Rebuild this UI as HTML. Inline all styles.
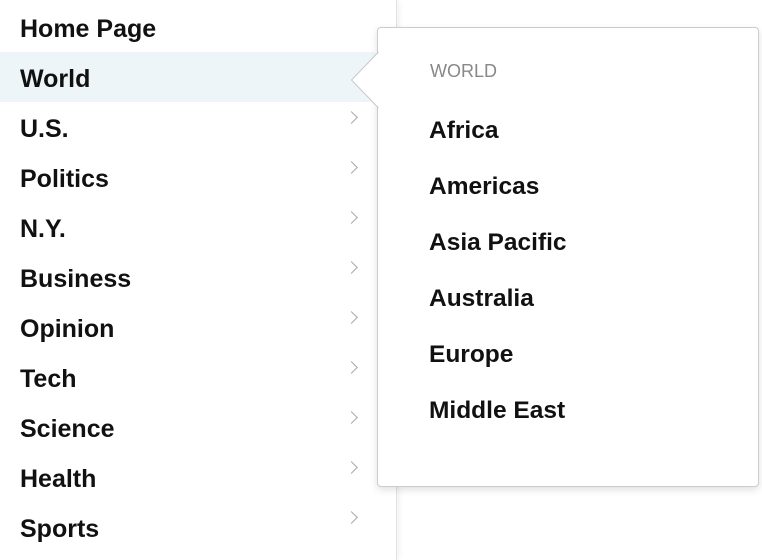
<!DOCTYPE html>
<html><head><style>
html,body{margin:0;padding:0;width:762px;height:560px;overflow:hidden;background:#fff;font-family:"Liberation Sans",Arial,sans-serif;}
.left{position:absolute;left:0;top:0;width:396px;height:560px;background:#fff;border-right:1px solid #e2e2e2;box-shadow:2px 0 6px rgba(0,0,0,0.06);}
.item{position:absolute;left:20px;font-weight:bold;font-size:25px;color:#111;line-height:30px;letter-spacing:0;}
.hl{position:absolute;left:0;top:52px;width:378px;height:50px;background:#eef5f8;border-radius:0 6px 6px 0;}
.chev{position:absolute;left:347px;width:8px;height:8px;border-top:1.2px solid #aaa;border-right:1.2px solid #aaa;transform:rotate(45deg);}
.pop{position:absolute;left:377px;top:27px;width:380px;height:458px;background:#fff;border:1px solid #ccc;border-radius:4px;box-shadow:0 3px 8px rgba(0,0,0,0.12);}
.sub{position:absolute;left:429px;font-weight:bold;font-size:24.5px;color:#111;line-height:30px;letter-spacing:0;}
</style></head><body>
<div class="left"></div>
<div class="hl"></div>
<div class="item" style="top:14px">Home Page</div>
<div class="item" style="top:64px">World</div>
<div class="item" style="top:114px">U.S.</div>
<div class="item" style="top:164px">Politics</div>
<div class="item" style="top:214px">N.Y.</div>
<div class="item" style="top:264px">Business</div>
<div class="item" style="top:314px">Opinion</div>
<div class="item" style="top:364px">Tech</div>
<div class="item" style="top:414px">Science</div>
<div class="item" style="top:464px">Health</div>
<div class="item" style="top:514px">Sports</div>
<div class="chev" style="top:113px"></div>
<div class="chev" style="top:163px"></div>
<div class="chev" style="top:213px"></div>
<div class="chev" style="top:263px"></div>
<div class="chev" style="top:313px"></div>
<div class="chev" style="top:363px"></div>
<div class="chev" style="top:413px"></div>
<div class="chev" style="top:463px"></div>
<div class="chev" style="top:513px"></div>
<div class="pop"></div>
<svg style="position:absolute;left:350px;top:52px" width="30" height="56"><path d="M28.5 0 L1.5 28 L28.5 56 L30 56 L30 0 Z" fill="#fff"/><path d="M28.5 0 L1.5 28 L28.5 56" fill="none" stroke="#c8c8c8" stroke-width="1"/></svg>
<div style="position:absolute;left:430px;top:61px;font-size:18px;color:#888;">WORLD</div>
<div class="sub" style="top:116px">Africa</div>
<div class="sub" style="top:172px">Americas</div>
<div class="sub" style="top:228px">Asia Pacific</div>
<div class="sub" style="top:284px">Australia</div>
<div class="sub" style="top:340px">Europe</div>
<div class="sub" style="top:396px">Middle East</div>
</body></html>
